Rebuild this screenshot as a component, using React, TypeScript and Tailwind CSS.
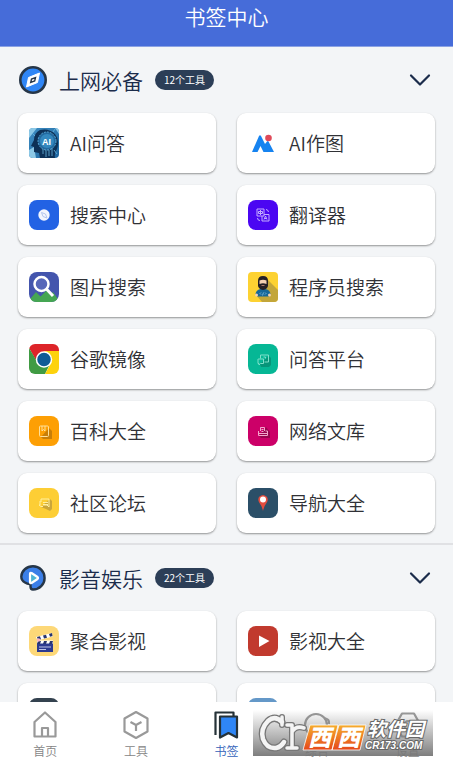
import type { ReactNode } from 'react'

type Tool = { name?: string; icon: ReactNode }

const Tile = ({ bg, children }: { bg: string; children?: ReactNode }) => (
  <svg viewBox="0 0 30 30" className="size-[30px] shrink-0" aria-hidden="true">
    <rect width="30" height="30" rx="8" fill={bg} />
    {children}
  </svg>
)

const AiHead = () => (
  <svg viewBox="0 0 30 30" className="size-[30px] shrink-0" aria-hidden="true">
    <defs>
      <clipPath id="ai-clip">
        <rect width="30" height="30" rx="4" />
      </clipPath>
      <linearGradient id="ai-sky" x1="0" y1="0" x2="1" y2="1">
        <stop offset="0" stopColor="#3f8fc4" />
        <stop offset="1" stopColor="#1c639d" />
      </linearGradient>
    </defs>
    <g clipPath="url(#ai-clip)">
      <rect width="30" height="30" fill="url(#ai-sky)" />
      <path d="M0 0h8L0 10zM0 22l5-3 2 11H0zM26 0h4v6z" fill="#8cc8e6" />
      <path d="M11 2Q5 5 5 12l-3 6 3 1v5l5 1 1 5h15q-1-5 2-9 3-9-2-15-6-6-15-4z" fill="#0d3157" />
      <circle cx="18" cy="13" r="9" fill="#23699f" stroke="#58a8d5" strokeDasharray="2 1" />
      <circle cx="18" cy="13" r="7" fill="#3488be" />
      <path d="M17 22v7m3-7v6m-6-7v5m9-6v8M3 5l3 3m20-7-2 3m4 22-3-4" stroke="#69b6df" strokeWidth=".8" />
      <text x="17.5" y="16.500" textAnchor="middle" fontSize="9" fontWeight="700" fill="#fff" fontFamily="Liberation Sans, sans-serif">
        AI
      </text>
    </g>
  </svg>
)

const Peaks = () => (
  <svg viewBox="0 0 30 30" className="size-[30px] shrink-0" aria-hidden="true">
    <path d="M4 24 11 8q1-1.500 2 0l4 8 2-2.500q.8-.8 1.500 0L26 24H15.500L12.500 18 9.500 24z" fill="#1683f0" />
    <circle cx="20.500" cy="10" r="3.300" fill="#e04a59" />
  </svg>
)

const ImageSearch = () => (
  <Tile bg="#4455ad">
    <path d="M1.500 26.500 7 20l4.500 4.500L18 18l4 4 2-2 4.500 6.500Q26.500 30 22 30H8q-5 0-6.500-3.500z" fill="#45a653" />
    <circle cx="12.500" cy="12" r="7" fill="#5767b9" stroke="#fff" strokeWidth="2.500" />
    <path d="m17.500 17 6.500 7" stroke="#fff" strokeWidth="3" />
  </Tile>
)

const Chrome = () => (
  <svg viewBox="0 0 30 30" className="size-[30px] shrink-0" aria-hidden="true">
    <defs>
      <clipPath id="chrome-clip">
        <rect width="30" height="30" rx="6" />
      </clipPath>
    </defs>
    <g clipPath="url(#chrome-clip)">
      <path d="M0 0h30v8H15L8 18 0 4z" fill="#dd2429" />
      <path d="M0 4l9 15 13-1-6 12H0z" fill="#409b43" />
      <path d="M15 7h15v23H16l6-11z" fill="#fdd20c" />
      <circle cx="15" cy="15.500" r="7.500" fill="#105b96" stroke="#fff" strokeWidth="1.500" />
    </g>
  </svg>
)

const Programmer = () => (
  <svg viewBox="0 0 30 30" className="size-[30px] shrink-0" aria-hidden="true">
    <rect width="30" height="30" rx="4" fill="#fdd232" />
    <path d="M19 7 30 18v8q0 4-4 4H14l-6-7z" fill="#c3a63a" />
    <path d="M7.500 23q0-5 5-6h5q5 1 5 6l-2 1.500h-11z" fill="#17679a" />
    <path d="M10 9q0-5 5-5t5 5v5q-1 3.500-5 4-4-.5-5-4z" fill="#241f24" />
    <path d="M11.500 8.500q3.500-1.500 7 0V12q-3.500-1.500-7 0z" fill="#f4d0b2" />
    <path d="M13.500 13.500h3" stroke="#c98b78" strokeWidth=".8" />
    <path d="m13 20.500-1 1 1 1m4-2 1 1-1 1m-1.500-2-1 3" fill="none" stroke="#9fd1ec" strokeWidth=".7" />
    <circle cx="8.500" cy="23" r="1.500" fill="#f4d0b2" />
    <circle cx="21.500" cy="23" r="1.500" fill="#f4d0b2" />
  </svg>
)

const ESSENTIALS: Tool[] = [
  { name: 'AI问答', icon: <AiHead /> },
  { name: 'AI作图', icon: <Peaks /> },
  {
    name: '搜索中心',
    icon: (
      <Tile bg="#2262e4">
        <circle cx="15" cy="15" r="5.700" fill="#f3f6fd" />
        <path d="m12.500 12.500 4 1.500 1.500 4-4-1.500z" fill="none" stroke="#b4c6ed" />
      </Tile>
    ),
  },
  {
    name: '翻译器',
    icon: (
      <Tile bg="#4b06f2">
        <path
          d="M9 9h7v7H9zM10.500 11.500h4v2h-4zM12.500 10v5M16 14.500h5v6.500h-7v-5M16 19.500l1.500-3.500 1.500 3.500m-2.500-1h2M18 9.500q2 0 2.500 2.500M9.500 18q0 2.500 2.500 2.500"
          fill="none"
          stroke="#c4adff"
        />
      </Tile>
    ),
  },
  { name: '图片搜索', icon: <ImageSearch /> },
  { name: '程序员搜索', icon: <Programmer /> },
  { name: '谷歌镜像', icon: <Chrome /> },
  {
    name: '问答平台',
    icon: (
      <Tile bg="#06b795">
        <path d="m12 20 9-8 2 2v7l-2 2h-8z" fill="#079579" />
        <path d="M12.500 14.500V11h8v7h-4m-6-3h5v4.500h-3L11 21v-1.500h-1V15zM15.500 13h2v1.500" fill="none" stroke="#7fe0ca" />
      </Tile>
    ),
  },
  {
    name: '百科大全',
    icon: (
      <Tile bg="#fd9f04">
        <path d="m12 21 8-9 3 3v8h-9z" fill="#c87e08" />
        <rect x="10.500" y="10" width="9" height="10.500" rx="1" fill="none" stroke="#ffe09a" />
        <path d="M13 10v5l1.500-1.500L16 15v-5" fill="none" stroke="#ffe09a" />
      </Tile>
    ),
  },
  {
    name: '网络文库',
    icon: (
      <Tile bg="#cc0068">
        <path d="m11 20 7-9 4 5v6h-9z" fill="#99054f" />
        <path d="M12.500 15v-3.500h4V15m-6 0v4.500h9V15h-2m-7 2.500h9m-6-4h2m-2 2h2" fill="none" stroke="#f2a6cb" />
      </Tile>
    ),
  },
  {
    name: '社区论坛',
    icon: (
      <Tile bg="#fdce35">
        <path d="m12 19 9-8 2 2v8l-2 2-4-2z" fill="#caa63a" />
        <path d="M12 14v-3h8v8l-2-2h-4m-3-4v4h-1l2 1.500h2m0-4h5m-5 2h5" fill="none" stroke="#fff0a2" />
      </Tile>
    ),
  },
  {
    name: '导航大全',
    icon: (
      <Tile bg="#2b4f68">
        <path d="M15 23q-1-5-3.500-8Q9 11 11.500 8.500q3.500-3 7 0Q21 11 18.500 15 16 18 15 23z" fill="#e24d3f" />
        <circle cx="15" cy="11.500" r="3" fill="#fff" />
      </Tile>
    ),
  },
]

const MEDIA: Tool[] = [
  {
    name: '聚合影视',
    icon: (
      <Tile bg="#fdd878">
        <path d="M8 15h16v11H8z" fill="#2b3990" />
        <path d="m7 11 16-4 .500 3.500-15 4zM8 14.500h16v3H8z" fill="#fff" />
        <path d="m8 11 3-.8 1 3-3 .8zm6-1.500 3-.8 1 3-3 .8zm6-1.600 3-.8.500 3-2.500.6zM9 15h3l-1 3H8zm6 0h3l-1 3h-3zm6 0h3l-1 3h-3z" fill="#27346f" />
        <path d="M10 21h12m-12 2.500h7" stroke="#e3e6ff" strokeWidth=".8" />
        <circle cx="9.500" cy="14" r="1.800" fill="#fbb6c2" />
      </Tile>
    ),
  },
  {
    name: '影视大全',
    icon: (
      <Tile bg="#c13a2e">
        <path d="M11 9.500 21.500 15 11 21z" fill="#fff" />
      </Tile>
    ),
  },
  { icon: <Tile bg="#34424f" /> },
  { icon: <Tile bg="#6498c8" /> },
]

const Compass = () => (
  <svg viewBox="-1 -1 30 30" className="size-[30px] shrink-0" aria-hidden="true">
    <circle cx="14" cy="14" r="12.700" fill="#2f86f6" stroke="#263648" strokeWidth="2.600" />
    <path d="m20.500 7-2 9.500L7.500 21l2-9.500z" fill="#fff" stroke="#fff" strokeLinejoin="round" />
    <path d="m16.500 11.500-.8 3.500-4 1.500.8-3.500z" fill="#fff" stroke="#263648" strokeWidth="1.400" />
  </svg>
)

const PlayBubble = () => (
  <svg viewBox="-1 -1 30 30" className="size-[30px] shrink-0" aria-hidden="true">
    <path
      d="M14 2.300A11.600 11.600 0 1 1 14 25.500q-2.500 0-2.500-3V20Q9 20.500 6 18.500 2.300 16.500 2.300 12.500A11.700 10.500 0 0 1 14 2.300z"
      fill="#3b7fe8"
      stroke="#263648"
      strokeWidth="2.400"
    />
    <path d="M11 10q0-1.500 1.500-1l6 4q1 1 0 2l-6 4q-1.500.5-1.500-1z" fill="#4fb5d4" stroke="#fff" strokeWidth="2.200" strokeLinejoin="round" />
  </svg>
)

const ToolCard = ({ name, icon }: Tool) => (
  <a
    href="#"
    className="flex h-[60px] items-center gap-[11px] rounded-[9px] bg-white pl-[11px] text-[19px] leading-7 text-[#303136] shadow-[0_1px_2px_rgba(0,0,0,0.4)]"
  >
    {icon}
    {name && <span className="whitespace-nowrap">{name}</span>}
  </a>
)

const Section = ({ title, count, icon, tools }: { title: string; count: number; icon: ReactNode; tools: Tool[] }) => (
  <section className="border-b-2 border-[#e0e1e4] px-[18px] pb-[10px]">
    <button type="button" className="flex h-[66px] w-full items-center pr-1">
      {icon}
      <h2 className="ml-[11px] text-[21px] leading-8 text-[#1b2c4b]">{title}</h2>
      <span className="ml-3 rounded-full bg-[#2c3e57] px-[9px] text-[10px] leading-5 font-normal text-white">{count}个工具</span>
      <svg viewBox="0 0 22 14" className="ml-auto h-[14px] w-[22px]" fill="none" stroke="#1b2c4b" strokeWidth="2.200" strokeLinecap="round" strokeLinejoin="round" aria-hidden="true">
        <path d="m2 2.500 9 9 9-9" />
      </svg>
    </button>
    <div className="grid grid-cols-2 gap-x-[21px] gap-y-3">
      {tools.map((tool, i) => (
        <ToolCard key={i} {...tool} />
      ))}
    </div>
  </section>
)

const NAV = [
  {
    label: '首页',
    icon: <path d="M4.500 12 15 2.500 25.500 12v14.500h-21zM12 26V18h6v8" />,
  },
  {
    label: '工具',
    icon: <path d="M15 2 26.500 8.500v13L15 28 3.500 21.500v-13zM9.500 12l5.500 3 5.500-3M15 15v6" />,
  },
  {
    label: '书签',
    active: true,
    icon: (
      <g stroke="#263238">
        <path d="M4.500 25V2.500h18v4" fill="#fff" />
        <path d="M9 6.500h17V27.500L17.500 23 9 27.500z" fill="#2f86f6" />
      </g>
    ),
  },
  {
    label: '综合',
    icon: (
      <>
        <circle cx="14" cy="15" r="11" />
        <path d="M22 8q6 1 5 6" />
      </>
    ),
  },
  {
    label: '设置',
    icon: (
      <>
        <path d="M9 3.500h12L27.500 15 21 26.500H9L2.500 15z" />
        <circle cx="15" cy="15" r="4" />
      </>
    ),
  },
]

const Watermark = () => (
  <svg viewBox="0 0 180 46" className="pointer-events-none absolute right-5 bottom-[10px] h-[46px] w-[180px]" aria-hidden="true">
    <defs>
      <linearGradient id="wm-shade" x1="0" y1="0" x2="0" y2="1">
        <stop offset="0" stopColor="#777" stopOpacity="0" />
        <stop offset="1" stopColor="#777" stopOpacity=".95" />
      </linearGradient>
      <linearGradient id="wm-orange" x1="0" y1="0" x2="0" y2="1">
        <stop offset="0" stopColor="#f6ad2d" />
        <stop offset="1" stopColor="#e5481b" />
      </linearGradient>
    </defs>
    <rect width="180" height="46" fill="url(#wm-shade)" />
    <g fill="none" strokeLinecap="round" strokeLinejoin="round">
      <g stroke="#777">
        <path d="M29 12q-7-7-14-1-8 8-5 18 4 10 13 9 5-1 8-6" strokeWidth="7" />
        <path d="M29 7v8M34 15h5v22m-5 1h10M39 22q4-7 12-4" strokeWidth="6" />
      </g>
      <g stroke="#f4f4f4">
        <path d="M29 12q-7-7-14-1-8 8-5 18 4 10 13 9 5-1 8-6" strokeWidth="4.500" />
        <path d="M29 7v8M34 15h5v22m-5 1h10M39 22q4-7 12-4" strokeWidth="3.500" />
      </g>
    </g>
    <path d="M57 15h28l-6 25H50zM86 15h27l-6 25H79z" fill="url(#wm-orange)" stroke="#fff" strokeWidth=".8" />
    <g fill="#fff" fontWeight="900" fontStyle="italic" fontFamily="Noto Sans CJK SC, sans-serif" fontSize="23">
      <text x="55" y="36">西</text>
      <text x="84" y="36">西</text>
    </g>
    <g fill="#fff" stroke="#666" strokeWidth="2" paintOrder="stroke" fontWeight="700" fontStyle="italic">
      <text x="114" y="26" fontSize="19" fontFamily="Noto Sans CJK SC, sans-serif">软件园</text>
      <text x="112" y="39" fontSize="10" fontFamily="Liberation Sans, sans-serif">CR173.COM</text>
    </g>
  </svg>
)

export default function App() {
  return (
    <div className="flex h-screen flex-col overflow-hidden bg-[#f3f5f7] font-['Noto_Sans_CJK_SC',sans-serif] font-[350]">
      <header className="border-b border-[#8ba2e3] bg-[#466cd9] pb-[14px] text-center text-white">
        <h1 className="text-[21px] leading-8">书签中心</h1>
      </header>

      <main className="min-h-0 flex-1 overflow-y-auto [scrollbar-width:none]">
        <Section title="上网必备" count={12} icon={<Compass />} tools={ESSENTIALS} />
        <Section title="影音娱乐" count={22} icon={<PlayBubble />} tools={MEDIA} />
      </main>

      <nav className="relative grid grid-cols-5 bg-white pt-2 pb-[5px]">
        {NAV.map(({ label, icon, active }) => (
          <a
            key={label}
            href="#"
            className={active ? 'flex flex-col items-center gap-px text-[#315fb9]' : 'flex flex-col items-center gap-px text-[#858585]'}
          >
            <svg viewBox="0 0 30 30" className="size-[30px]" fill="none" stroke="#999" strokeWidth="2.200" strokeLinejoin="round" aria-hidden="true">
              {icon}
            </svg>
            <span className="text-[12px] leading-5">{label}</span>
          </a>
        ))}
        <Watermark />
      </nav>
    </div>
  )
}
